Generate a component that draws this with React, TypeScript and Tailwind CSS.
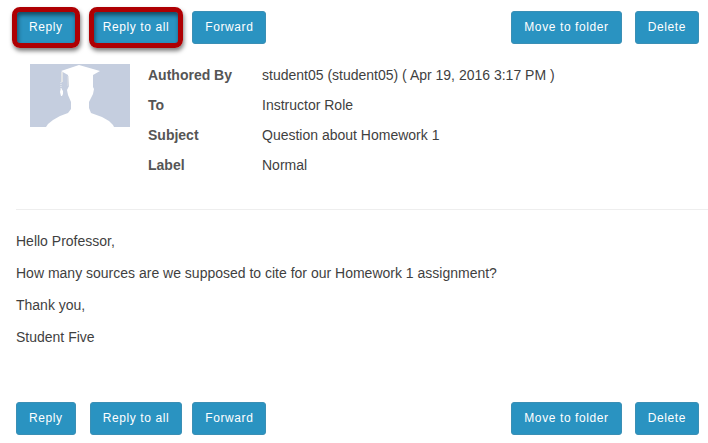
import type { ReactNode } from "react";

type ActionProps = { children: ReactNode; ring?: string };

function Action({ children, ring }: ActionProps) {
  return (
    <div className="relative flex">
      <button
        type="button"
        className="h-[33px] rounded-[3px] border border-[#3a8fb5] bg-[#2a93c1] px-3 pb-px text-xs tracking-wider whitespace-nowrap text-white"
      >
        {children}
      </button>
      {ring && (
        <span
          aria-hidden="true"
          className={`pointer-events-none absolute rounded-lg border-[5px] border-[#ae0003] shadow-[1px_3px_4px_rgba(0,0,0,0.5),inset_1px_3px_4px_rgba(0,0,0,0.5)] ${ring}`}
        />
      )}
    </div>
  );
}

function Toolbar({ highlighted = false }: { highlighted?: boolean }) {
  return (
    <div className="flex justify-between pr-[9px]">
      <div className="flex gap-[10px]">
        <div className="mr-1 flex">
          <Action ring={highlighted ? "-inset-x-1 -inset-y-1" : undefined}>Reply</Action>
        </div>
        <Action ring={highlighted ? "-inset-x-px -inset-y-1" : undefined}>Reply to all</Action>
        <Action>Forward</Action>
      </div>
      <div className="flex gap-[13px]">
        <Action>Move to folder</Action>
        <Action>Delete</Action>
      </div>
    </div>
  );
}

function Avatar() {
  return (
    <svg viewBox="0 0 100 63" className="h-[63px] w-[100px] shrink-0" role="img" aria-label="Student">
      <rect width="100" height="63" fill="#c5cedf" />
      <path
        fill="#fff"
        d="M49 1 L70 7 L63 11 L63 23 L64 25 L63 30 L59 38 L59 44 L61 49 L72 53 L79 57 L83 61 L84 63 L16 63 L18 60 L23 56 L30 52 L38 49 L41 45 L41 38 L38 31 L37 26 L39 22 L38 11 L31 7 Z"
      />
      <path d="M38 12 V22" fill="none" stroke="#dcdfe3" strokeWidth="1" />
      <path d="M32 8 V18" fill="none" stroke="#e2e4e6" strokeWidth="2" />
      <path d="M31 18 V25" fill="none" stroke="#edf0f3" strokeWidth="1" strokeDasharray="1 1" />
      <path d="M31 24 L33 27 L33 30 L32 32 L31 32 L30 28 Z" fill="#fff" />
    </svg>
  );
}

const details = [
  ["Authored By", "student05 (student05) ( Apr 19, 2016 3:17 PM )"],
  ["To", "Instructor Role"],
  ["Subject", "Question about Homework 1"],
  ["Label", "Normal"],
];

export default function App() {
  return (
    <main className="bg-white pt-[11px] pb-2 pl-4 font-['Liberation_Sans',Arial,sans-serif] text-sm text-[#3f3f3f]">
      <Toolbar highlighted />
      <section className="mt-4 flex gap-[18px] pl-[14px]">
        <div className="pt-1">
          <Avatar />
        </div>
        <dl className="grid grow grid-cols-[114px_1fr] leading-[30px]">
          {details.map(([name, value]) => (
            <div key={name} className="contents">
              <dt className="font-bold text-[#555]">{name}</dt>
              <dd>{value}</dd>
            </div>
          ))}
        </dl>
      </section>
      <hr className="mt-[29px] border-[#eee]" />
      <article className="mt-[21px] mb-[55px] space-y-3 leading-5">
        <p>Hello Professor,</p>
        <p>How many sources are we supposed to cite for our Homework 1 assignment?</p>
        <p>Thank you,</p>
        <p>Student Five</p>
      </article>
      <Toolbar />
    </main>
  );
}
